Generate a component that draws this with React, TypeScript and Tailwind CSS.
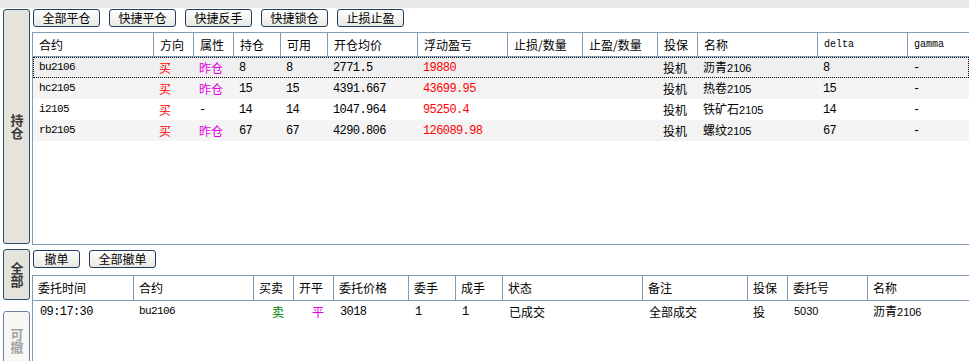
import React from 'react';

const cjk = "font-['Noto_Sans_CJK_SC','Noto_Sans',sans-serif]";
const mono = "font-['Liberation_Mono','DejaVu_Sans_Mono',monospace]";
const num = `${mono} text-[12px] tracking-[-0.6px]`;
const code = `${mono} text-[11px] tracking-[-0.6px]`;
const sans = "font-['Liberation_Sans',sans-serif] text-[11px]";

const posHeads = [
  { label: '合约', w: 'w-[121px]', small: false },
  { label: '方向', w: 'w-[40px]', small: false },
  { label: '属性', w: 'w-[40px]', small: false },
  { label: '持仓', w: 'w-[47px]', small: false },
  { label: '可用', w: 'w-[47px]', small: false },
  { label: '开仓均价', w: 'w-[90px]', small: false },
  { label: '浮动盈亏', w: 'w-[90px]', small: false },
  { label: '止损/数量', w: 'w-[75px]', small: false },
  { label: '止盈/数量', w: 'w-[75px]', small: false },
  { label: '投保', w: 'w-[40px]', small: false },
  { label: '名称', w: 'w-[120px]', small: false },
  { label: 'delta', w: 'w-[90px]', small: true },
  { label: 'gamma', w: 'w-[90px]', small: true },
];

const positions = [
  { code: 'bu2106', attr: '昨仓', hold: '8', avail: '8', price: '2771.5', pnl: '19880', name: '沥青', month: '2106', delta: '8' },
  { code: 'hc2105', attr: '昨仓', hold: '15', avail: '15', price: '4391.667', pnl: '43699.95', name: '热卷', month: '2105', delta: '15' },
  { code: 'i2105', attr: '-', hold: '14', avail: '14', price: '1047.964', pnl: '95250.4', name: '铁矿石', month: '2105', delta: '14' },
  { code: 'rb2105', attr: '昨仓', hold: '67', avail: '67', price: '4290.806', pnl: '126089.98', name: '螺纹', month: '2105', delta: '67' },
];

const orderHeads = [
  { label: '委托时间', w: 'w-[101px]' },
  { label: '合约', w: 'w-[120px]' },
  { label: '买卖', w: 'w-[40px]' },
  { label: '开平', w: 'w-[40px]' },
  { label: '委托价格', w: 'w-[75px]' },
  { label: '委手', w: 'w-[47px]' },
  { label: '成手', w: 'w-[47px]' },
  { label: '状态', w: 'w-[140px]' },
  { label: '备注', w: 'w-[105px]' },
  { label: '投保', w: 'w-[40px]' },
  { label: '委托号', w: 'w-[80px]' },
  { label: '名称', w: 'w-[110px]' },
];

function Btn({ label, w }: { label: string; w: string }) {
  return (
    <button
      className={`${w} h-[18px] shrink-0 rounded-[3px] border border-[#1f3f62] bg-gradient-to-b from-white to-[#e9e8e2] text-[12px] leading-[16px] text-black ${cjk}`}
    >
      {label}
    </button>
  );
}

function Tab({ label, h, active }: { label: string; h: string; active: boolean }) {
  return (
    <div
      className={`${h} w-[27px] shrink-0 rounded-[3px] border flex items-center justify-center text-[13px] font-bold ${cjk} ${
        active
          ? 'border-[#2c4a6a] bg-[#e4e3dc] text-[#3a3a3a]'
          : 'border-[#6b8199] bg-[#f7f7f5] text-[#a3a3a3]'
      }`}
    >
      <span className="[writing-mode:vertical-rl] [text-orientation:upright] leading-[16px]">{label}</span>
    </div>
  );
}

export default function App() {
  return (
    <div className="w-[969px] h-[361px] overflow-hidden bg-white text-black">
      <div className="h-[8px] bg-[#e8e8e8]" />
      <div className="flex h-[353px]">
        {/* side tabs */}
        <div className="w-[32px] shrink-0 pl-[3px] pt-[1px] flex flex-col">
          <Tab label="持仓" h="h-[235px]" active />
          <div className="mt-[5px]">
            <Tab label="全部" h="h-[51px]" active />
          </div>
          <div className="mt-[11px]">
            <Tab label="可撤" h="h-[60px]" active={false} />
          </div>
        </div>

        <div className="flex-1 min-w-0 flex flex-col">
          {/* position toolbar */}
          <div className="flex gap-[9px] pl-[1px] pt-[1px]">
            <Btn label="全部平仓" w="w-[67px]" />
            <Btn label="快捷平仓" w="w-[67px]" />
            <Btn label="快捷反手" w="w-[67px]" />
            <Btn label="快捷锁仓" w="w-[67px]" />
            <Btn label="止损止盈" w="w-[67px]" />
          </div>

          {/* positions table */}
          <div className="mt-[5px] h-[213px] border-t border-b border-l border-[#7f9db9] overflow-hidden">
            <div className="flex h-[24px] border-b border-[#7f9db9]">
              {posHeads.map((h) => (
                <div
                  key={h.label}
                  className={`${h.w} shrink-0 border-r border-[#7f9db9] pl-[6px] flex items-center ${
                    h.small ? `${mono} text-[10px]` : `${cjk} text-[12px]`
                  }`}
                >
                  {h.label}
                </div>
              ))}
            </div>
            {positions.map((p, i) => (
              <div
                key={p.code}
                className={`flex h-[21px] items-center ${
                  i === 0
                    ? 'bg-[#efefef] border border-dotted border-black'
                    : i % 2 === 1
                    ? 'bg-[#f4f4f4]'
                    : 'bg-white'
                }`}
              >
                <div className={`w-[121px] shrink-0 pl-[6px] ${code} ${i === 0 ? '-ml-[1px]' : ''}`}>{p.code}</div>
                <div className={`w-[40px] shrink-0 pl-[5px] text-[12px] text-[#ff0000] ${cjk}`}>买</div>
                {p.attr === '-' ? (
                  <div className={`w-[40px] shrink-0 pl-[5px] ${num}`}>-</div>
                ) : (
                  <div className={`w-[40px] shrink-0 pl-[5px] text-[12px] text-[#e000e0] ${cjk}`}>{p.attr}</div>
                )}
                <div className={`w-[47px] shrink-0 pl-[5px] ${num}`}>{p.hold}</div>
                <div className={`w-[47px] shrink-0 pl-[5px] ${num}`}>{p.avail}</div>
                <div className={`w-[90px] shrink-0 pl-[5px] ${num}`}>{p.price}</div>
                <div className={`w-[90px] shrink-0 pl-[5px] text-[#ff0000] ${num}`}>{p.pnl}</div>
                <div className="w-[75px] shrink-0" />
                <div className="w-[75px] shrink-0" />
                <div className={`w-[40px] shrink-0 pl-[5px] text-[12px] ${cjk}`}>投机</div>
                <div className={`w-[120px] shrink-0 pl-[5px] text-[12px] ${cjk}`}>
                  {p.name}
                  <span className={sans}>{p.month}</span>
                </div>
                <div className={`w-[90px] shrink-0 pl-[5px] ${num}`}>{p.delta}</div>
                <div className={`w-[90px] shrink-0 pl-[5px] ${num}`}>-</div>
              </div>
            ))}
          </div>

          {/* orders toolbar */}
          <div className="mt-[5px] flex gap-[9px] pl-[1px]">
            <Btn label="撤单" w="w-[47px]" />
            <Btn label="全部撤单" w="w-[67px]" />
          </div>

          {/* orders table */}
          <div className="mt-[7px] flex-1 border-t border-l border-[#7f9db9] overflow-hidden">
            <div className="flex h-[25px] border-b border-[#7f9db9]">
              {orderHeads.map((h) => (
                <div
                  key={h.label}
                  className={`${h.w} shrink-0 border-r border-[#7f9db9] pl-[5px] flex items-center text-[12px] ${cjk}`}
                >
                  {h.label}
                </div>
              ))}
            </div>
            <div className="flex h-[21px] items-center">
              <div className={`w-[101px] shrink-0 pl-[7px] ${num}`}>09:17:30</div>
              <div className={`w-[120px] shrink-0 pl-[5px] ${code}`}>bu2106</div>
              <div className={`w-[40px] shrink-0 pr-[10px] text-right text-[12px] text-[#008000] ${cjk}`}>卖</div>
              <div className={`w-[40px] shrink-0 pr-[10px] text-right text-[12px] text-[#e000e0] ${cjk}`}>平</div>
              <div className={`w-[75px] shrink-0 pl-[6px] ${num}`}>3018</div>
              <div className={`w-[47px] shrink-0 pl-[6px] ${num}`}>1</div>
              <div className={`w-[47px] shrink-0 pl-[6px] ${num}`}>1</div>
              <div className={`w-[140px] shrink-0 pl-[6px] text-[12px] ${cjk}`}>已成交</div>
              <div className={`w-[105px] shrink-0 pl-[6px] text-[12px] ${cjk}`}>全部成交</div>
              <div className={`w-[40px] shrink-0 pl-[5px] text-[12px] ${cjk}`}>投</div>
              <div className={`w-[80px] shrink-0 pl-[6px] ${sans}`}>5030</div>
              <div className={`w-[110px] shrink-0 pl-[5px] text-[12px] ${cjk}`}>
                沥青<span className={sans}>2106</span>
              </div>
            </div>
          </div>
        </div>
      </div>
    </div>
  );
}
